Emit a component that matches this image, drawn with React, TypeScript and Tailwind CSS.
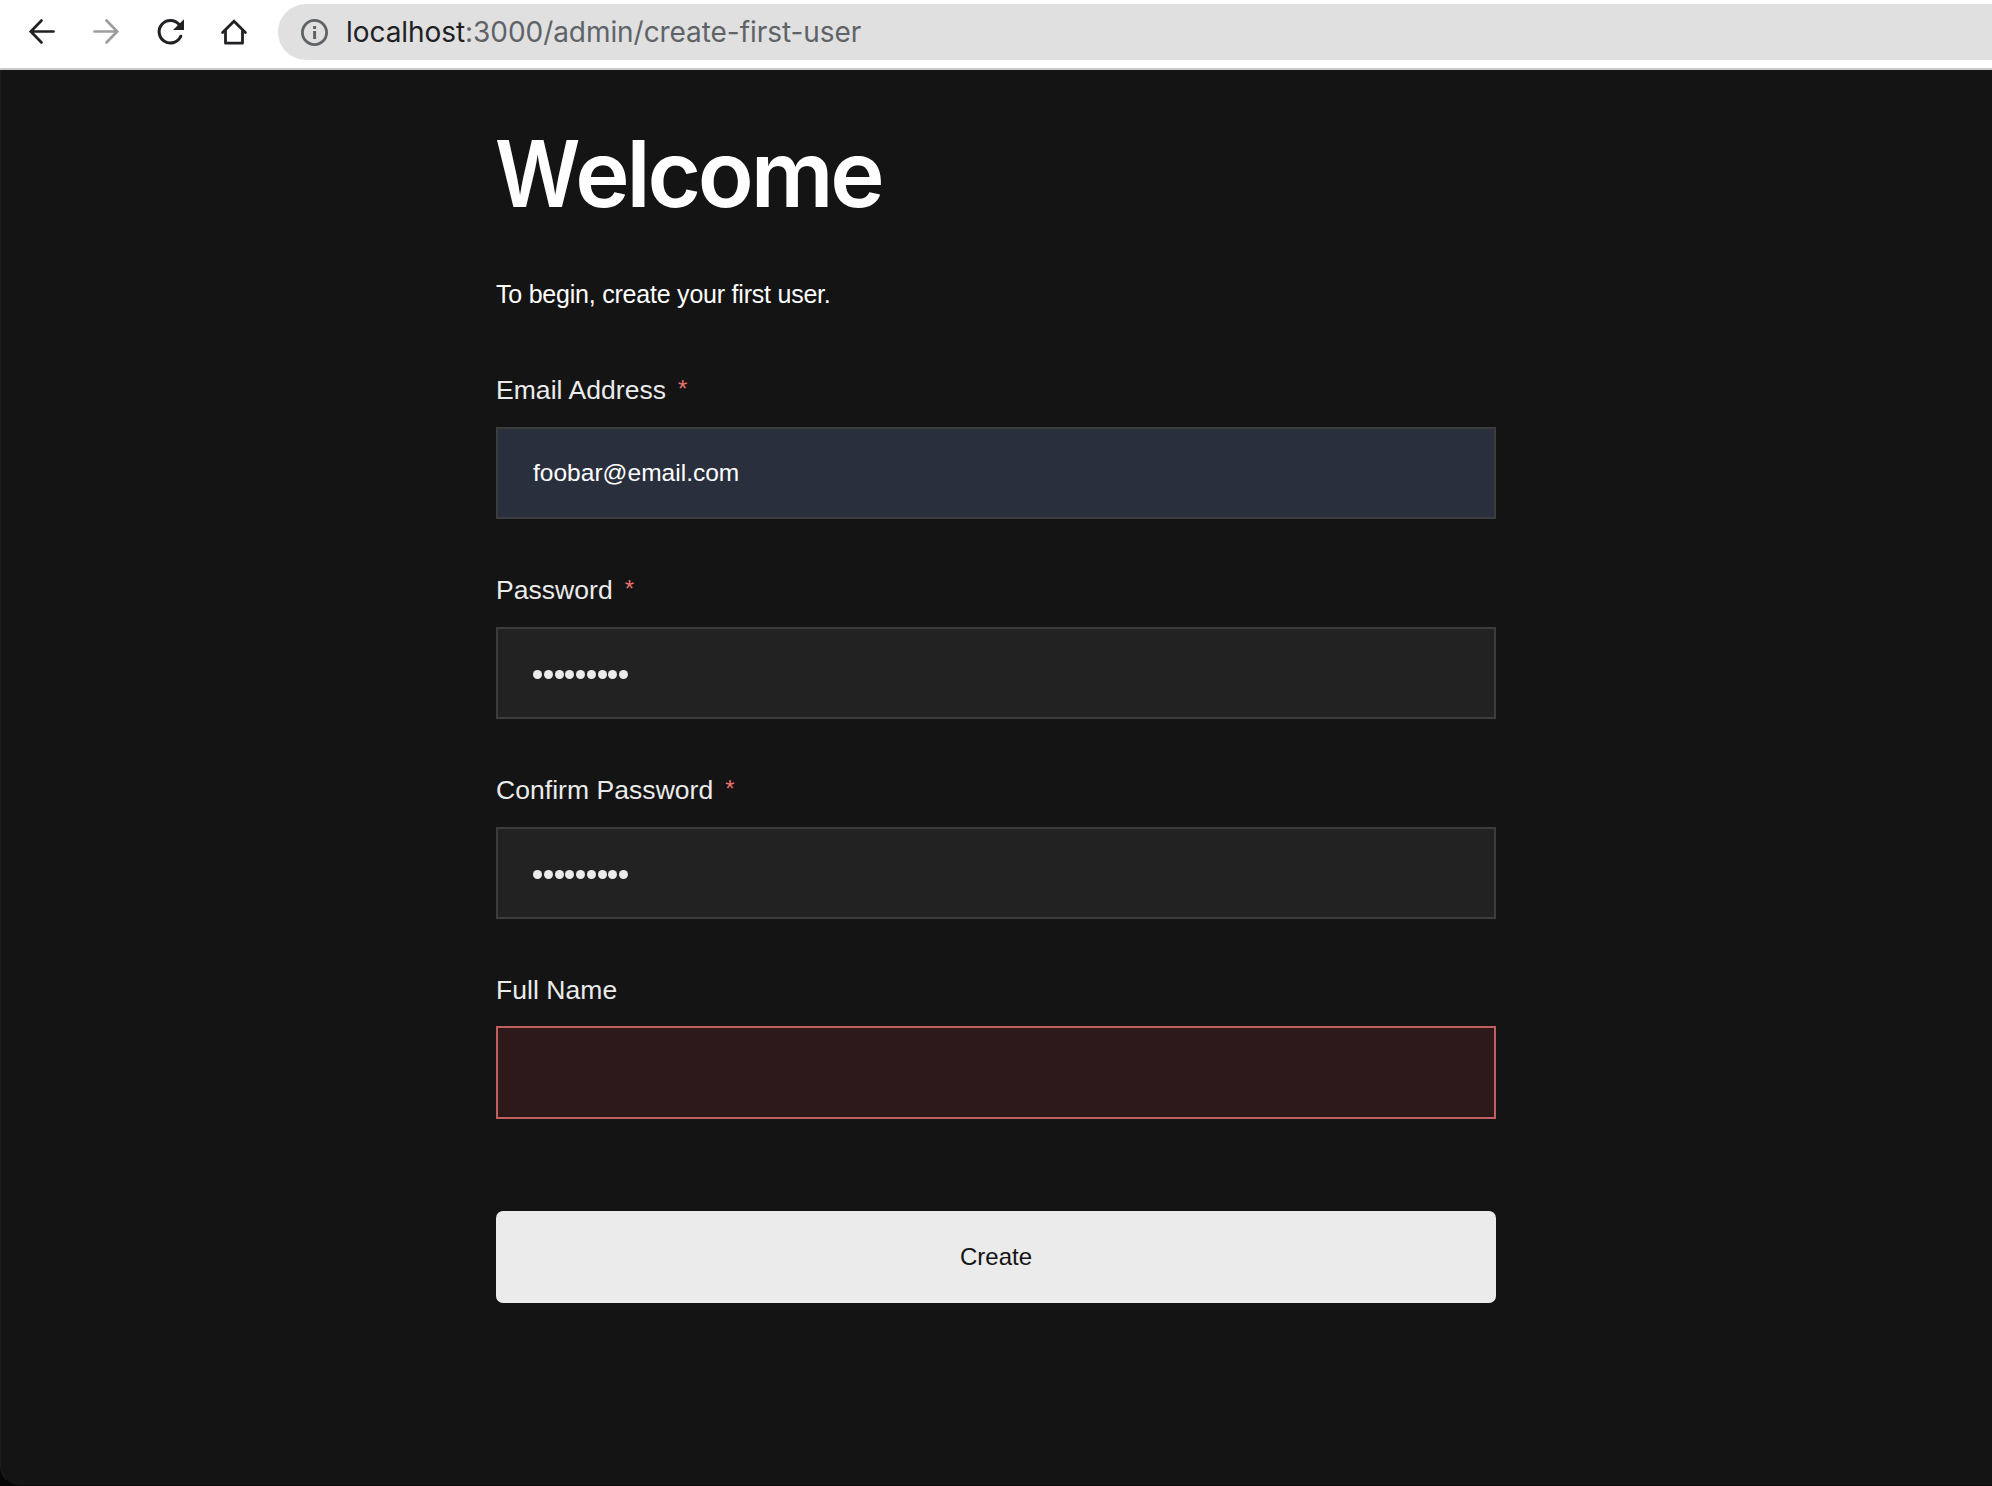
import type { ReactNode } from 'react';

function BrowserBar() {
  return (
    <header className="flex h-[70px] shrink-0 items-start border-b-2 border-[#cbcbcb] bg-white pt-1 pl-[26px]">
      <div className="flex h-14 w-[252px] shrink-0 items-center gap-8">
        <svg className="size-8 shrink-0" viewBox="0 0 32 32" fill="none" stroke="#202124" strokeWidth="2.7" strokeLinecap="round" strokeLinejoin="miter">
          <path d="M27.5 15.5H5M15.5 4.5 4.8 15.5 15.5 26.5" />
        </svg>
        <svg className="size-8 shrink-0" viewBox="0 0 32 32" fill="none" stroke="#9e9e9e" strokeWidth="2.7" strokeLinecap="round" strokeLinejoin="miter">
          <path d="M4.5 15.5H27M16.5 4.5 27.2 15.5 16.5 26.5" />
        </svg>
        <svg className="size-8 shrink-0" viewBox="0 0 32 32" fill="none">
          <path d="M25.2 8.6A11.3 11.3 0 1 0 26.8 20.2" stroke="#202124" strokeWidth="3" strokeLinecap="round" />
          <path d="M30 3.2V14H19z" fill="#202124" />
        </svg>
        <svg className="size-8 shrink-0" viewBox="0 0 32 32" fill="none" stroke="#202124" strokeWidth="2.8" strokeLinejoin="round" strokeLinecap="round">
          <path d="M4.6 16.4 16 5.3 27.4 16.4" strokeLinejoin="miter" />
          <path d="M7.5 15V27.2H24.5V15" />
        </svg>
      </div>
      <div className="flex h-14 flex-1 items-center rounded-l-full bg-[#e0e0e0] pl-[21px]">
        <svg className="size-8 shrink-0" viewBox="0 0 32 32" fill="none">
          <circle cx="15.5" cy="16.5" r="12.1" stroke="#5f6368" strokeWidth="2.8" />
          <path d="M14.1 15h3v8h-3zM14.1 10h3v3h-3z" fill="#5f6368" />
        </svg>
        <p className="ml-[15px] font-['Inter',sans-serif] text-[28px] leading-14 tracking-[-0.06px] whitespace-nowrap text-[#5f6368]">
          <span className="text-[#202124]">localhost</span>:3000/admin/create-first-user
        </p>
      </div>
    </header>
  );
}

function Field({ label, required, box, children }: { label: string; required?: boolean; box: string; children?: ReactNode }) {
  return (
    <div className="h-[200px]">
      <div className="flex h-[57px] items-start text-[26.5px] leading-[40px] tracking-[0.05px] text-[#ebebeb]">
        <span>{label}</span>
        {required && <span className="ml-3 text-[24px] leading-[37px] text-[#e9716f]">*</span>}
      </div>
      <div className={`flex items-center border-2 pl-[35px] ${box}`}>{children}</div>
    </div>
  );
}

function Dots() {
  return (
    <div className="mt-[3px] flex gap-[1.75px]">
      {Array.from({ length: 9 }, (_, i) => (
        <span key={i} className="size-[9px] rounded-full bg-[#ebebeb]" />
      ))}
    </div>
  );
}

export default function App() {
  return (
    <div className="flex h-[1486px] flex-col overflow-hidden bg-[#07070a] font-['Liberation_Sans',Arial,sans-serif]">
      <BrowserBar />
      <main className="flex-1 rounded-bl-[20px] border-b border-l border-b-[#0c0c0c] border-l-[#1c1c1c] bg-[#141414]">
        <div className="ml-[495px] w-[1000px]">
          <h1 className="-ml-[1px] pt-[49px] font-['Inter',sans-serif] text-[92px] leading-[110px] font-semibold tracking-[-3.2px] text-white">
            <span className="-mr-[13.5px] inline-block origin-left scale-x-[0.91] tracking-normal">W</span>elcome
          </h1>
          <p className="mt-[45px] text-[25px] leading-10 tracking-[-0.22px] text-white">To begin, create your first user.</p>
          <form className="mt-14">
            <Field label="Email Address" required box="h-[92px] border-[#3c3c3c] bg-[#2a2f3d]">
              <span className="text-[24.5px] tracking-[0.02px] text-white">foobar@email.com</span>
            </Field>
            <Field label="Password" required box="h-[92px] border-[#3c3c3c] bg-[#222222]">
              <Dots />
            </Field>
            <Field label="Confirm Password" required box="h-[92px] border-[#3c3c3c] bg-[#222222]">
              <Dots />
            </Field>
            <Field label="Full Name" box="-mt-px h-[93px] border-[#bf5f60] bg-[#2e191a]" />
            <button type="button" className="mt-[41px] block h-[92px] w-full rounded-[7px] bg-[#ebebeb] text-[24px] text-[#141414]">
              Create
            </button>
          </form>
        </div>
      </main>
    </div>
  );
}
